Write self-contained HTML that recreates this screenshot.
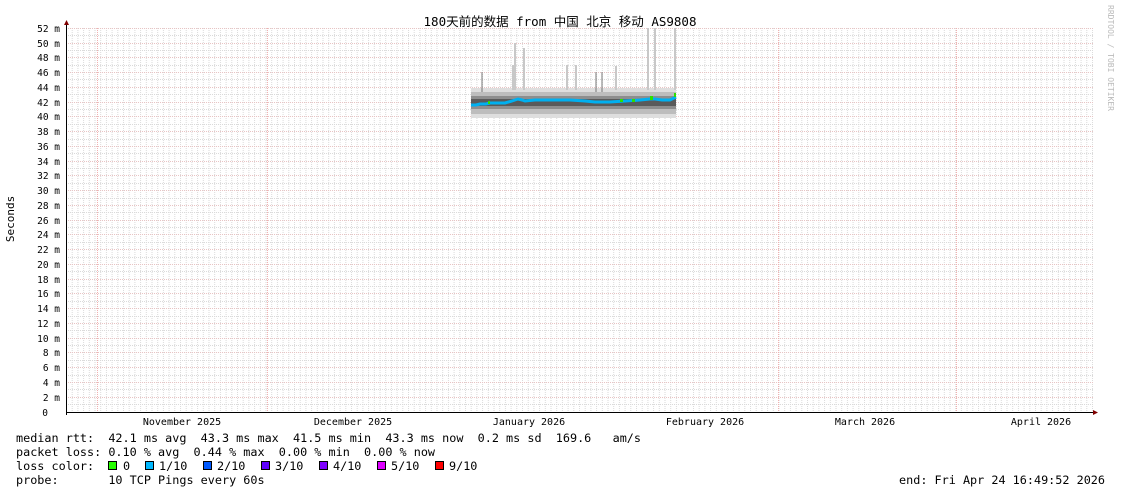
<!DOCTYPE html>
<html><head><meta charset="utf-8"><style>
html,body{margin:0;padding:0;background:#fff;width:1121px;height:494px;overflow:hidden}
svg{display:block}
.m{font-family:"DejaVu Sans Mono","Liberation Mono",monospace;fill:#000}
</style></head><body>
<svg width="1121" height="494" viewBox="0 0 1121 494" xmlns="http://www.w3.org/2000/svg">
<defs>
<pattern id="vg" x="66" y="0" width="5.7" height="494" patternUnits="userSpaceOnUse">
<line x1="0.5" y1="0" x2="0.5" y2="494" stroke="#dadada" stroke-width="1" stroke-dasharray="1,1"/>
</pattern>
</defs>
<rect x="66" y="28" width="1027" height="384" fill="url(#vg)"/>
<g stroke="#dadada" stroke-dasharray="1,1">
<line x1="66" x2="1093" y1="35.5" y2="35.5"/><line x1="66" x2="1093" y1="50.5" y2="50.5"/><line x1="66" x2="1093" y1="65.5" y2="65.5"/><line x1="66" x2="1093" y1="79.5" y2="79.5"/><line x1="66" x2="1093" y1="94.5" y2="94.5"/><line x1="66" x2="1093" y1="109.5" y2="109.5"/><line x1="66" x2="1093" y1="124.5" y2="124.5"/><line x1="66" x2="1093" y1="139.5" y2="139.5"/><line x1="66" x2="1093" y1="153.5" y2="153.5"/><line x1="66" x2="1093" y1="168.5" y2="168.5"/><line x1="66" x2="1093" y1="183.5" y2="183.5"/><line x1="66" x2="1093" y1="198.5" y2="198.5"/><line x1="66" x2="1093" y1="212.5" y2="212.5"/><line x1="66" x2="1093" y1="227.5" y2="227.5"/><line x1="66" x2="1093" y1="242.5" y2="242.5"/><line x1="66" x2="1093" y1="257.5" y2="257.5"/><line x1="66" x2="1093" y1="271.5" y2="271.5"/><line x1="66" x2="1093" y1="286.5" y2="286.5"/><line x1="66" x2="1093" y1="301.5" y2="301.5"/><line x1="66" x2="1093" y1="316.5" y2="316.5"/><line x1="66" x2="1093" y1="330.5" y2="330.5"/><line x1="66" x2="1093" y1="345.5" y2="345.5"/><line x1="66" x2="1093" y1="360.5" y2="360.5"/><line x1="66" x2="1093" y1="375.5" y2="375.5"/><line x1="66" x2="1093" y1="389.5" y2="389.5"/><line x1="66" x2="1093" y1="404.5" y2="404.5"/>
</g>
<g stroke="#e8c4c4" stroke-dasharray="1,1">
<line x1="66" x2="1093" y1="28.5" y2="28.5"/><line x1="66" x2="1093" y1="43.5" y2="43.5"/><line x1="66" x2="1093" y1="57.5" y2="57.5"/><line x1="66" x2="1093" y1="72.5" y2="72.5"/><line x1="66" x2="1093" y1="87.5" y2="87.5"/><line x1="66" x2="1093" y1="102.5" y2="102.5"/><line x1="66" x2="1093" y1="116.5" y2="116.5"/><line x1="66" x2="1093" y1="131.5" y2="131.5"/><line x1="66" x2="1093" y1="146.5" y2="146.5"/><line x1="66" x2="1093" y1="161.5" y2="161.5"/><line x1="66" x2="1093" y1="175.5" y2="175.5"/><line x1="66" x2="1093" y1="190.5" y2="190.5"/><line x1="66" x2="1093" y1="205.5" y2="205.5"/><line x1="66" x2="1093" y1="220.5" y2="220.5"/><line x1="66" x2="1093" y1="234.5" y2="234.5"/><line x1="66" x2="1093" y1="249.5" y2="249.5"/><line x1="66" x2="1093" y1="264.5" y2="264.5"/><line x1="66" x2="1093" y1="279.5" y2="279.5"/><line x1="66" x2="1093" y1="293.5" y2="293.5"/><line x1="66" x2="1093" y1="308.5" y2="308.5"/><line x1="66" x2="1093" y1="323.5" y2="323.5"/><line x1="66" x2="1093" y1="338.5" y2="338.5"/><line x1="66" x2="1093" y1="352.5" y2="352.5"/><line x1="66" x2="1093" y1="367.5" y2="367.5"/><line x1="66" x2="1093" y1="382.5" y2="382.5"/><line x1="66" x2="1093" y1="397.5" y2="397.5"/>
</g>
<g stroke="#f0b0b0" stroke-dasharray="1,1">
<line x1="97.5" x2="97.5" y1="28" y2="412"/><line x1="267.5" x2="267.5" y1="28" y2="412"/><line x1="778.5" x2="778.5" y1="28" y2="412"/><line x1="956.5" x2="956.5" y1="28" y2="412"/>
</g>
<!-- data -->
<g>
<rect x="471" y="88" width="205" height="30" fill="#dedede"/>
<rect x="471" y="92" width="205" height="22" fill="#bdbdbd"/>
<rect x="471" y="96" width="205" height="13" fill="#8e8e8e"/>
<rect x="471" y="99" width="205" height="7" fill="#5a5a5a"/>
<g stroke="#c8c8c8" stroke-width="2">
<line x1="515" y1="43" x2="515" y2="90"/><line x1="513" y1="65" x2="513" y2="90"/><line x1="524" y1="48" x2="524" y2="90"/><line x1="567" y1="65" x2="567" y2="90"/><line x1="576" y1="65" x2="576" y2="90"/><line x1="616" y1="66" x2="616" y2="90"/><line x1="648" y1="28" x2="648" y2="90"/><line x1="655" y1="28" x2="655" y2="90"/><line x1="675" y1="28" x2="675" y2="90"/>
</g>
<g stroke="#777" stroke-width="1"><line x1="482" y1="72" x2="482" y2="92"/><line x1="596" y1="72" x2="596" y2="92"/><line x1="602" y1="72" x2="602" y2="92"/></g>
<polyline fill="none" stroke="#00b0f0" stroke-width="3" points="471,105 476,105 480,104 486,104 490,103 500,103 505,103 512,101 518,99 522,100 525,101 535,100 550,100 570,100 585,101 595,102 610,102 625,101 640,100 650,99 655,99 662,100 670,100 676,97"/>
<g fill="#2de000"><rect x="488" y="101" width="2" height="3"/><rect x="620" y="99" width="3" height="3"/><rect x="632" y="99" width="3" height="3"/><rect x="650" y="96" width="3" height="4"/><rect x="674" y="93" width="2" height="4"/></g>
</g>
<line x1="66" y1="412.5" x2="1094" y2="412.5" stroke="#000"/>
<line x1="66.5" y1="24" x2="66.5" y2="415" stroke="#000"/>
<polygon points="64,25 69,25 66.5,20" fill="#800000"/>
<polygon points="1093,410 1093,415 1098,412.5" fill="#800000"/>
<g class="m" font-size="9.5" text-anchor="end">
<text x="60" y="32">52 m</text><text x="60" y="47">50 m</text><text x="60" y="61">48 m</text><text x="60" y="76">46 m</text><text x="60" y="91">44 m</text><text x="60" y="106">42 m</text><text x="60" y="120">40 m</text><text x="60" y="135">38 m</text><text x="60" y="150">36 m</text><text x="60" y="165">34 m</text><text x="60" y="179">32 m</text><text x="60" y="194">30 m</text><text x="60" y="209">28 m</text><text x="60" y="224">26 m</text><text x="60" y="238">24 m</text><text x="60" y="253">22 m</text><text x="60" y="268">20 m</text><text x="60" y="283">18 m</text><text x="60" y="297">16 m</text><text x="60" y="312">14 m</text><text x="60" y="327">12 m</text><text x="60" y="342">10 m</text><text x="60" y="356">8 m</text><text x="60" y="371">6 m</text><text x="60" y="386">4 m</text><text x="60" y="401">2 m</text><text x="48" y="416">0</text>
</g>
<g class="m" font-size="10" text-anchor="middle">
<text x="182" y="425">November 2025</text><text x="353" y="425">December 2025</text><text x="529" y="425">January 2026</text><text x="705" y="425">February 2026</text><text x="865" y="425">March 2026</text><text x="1041" y="425">April 2026</text>
</g>
<text class="m" font-size="11" transform="translate(14,219) rotate(-90)" text-anchor="middle">Seconds</text>
<text font-family="'DejaVu Sans Mono','Noto Sans CJK SC',monospace" font-size="12.5" x="560" y="26" text-anchor="middle">180天前的数据 from 中国 北京 移动 AS9808</text>
<text class="m" font-size="8" style="fill:#bbb" transform="translate(1108,5) rotate(90)">RRDTOOL / TOBI OETIKER</text>
<g class="m" font-size="11.8">
<text x="16" y="442" xml:space="preserve">median rtt:  42.1 ms avg  43.3 ms max  41.5 ms min  43.3 ms now  0.2 ms sd  169.6   am/s</text>
<text x="16" y="456" xml:space="preserve">packet loss: 0.10 % avg  0.44 % max  0.00 % min  0.00 % now</text>
<text x="16" y="470">loss color:</text>
<text x="123" y="470">0</text><text x="159" y="470">1/10</text><text x="217" y="470">2/10</text><text x="275" y="470">3/10</text><text x="333" y="470">4/10</text><text x="391" y="470">5/10</text><text x="449" y="470">9/10</text>
<text x="16" y="484" xml:space="preserve">probe:       10 TCP Pings every 60s</text>
<text x="1105" y="484" text-anchor="end">end: Fri Apr 24 16:49:52 2026</text>
</g>
<g stroke="#000" stroke-width="1">
<rect x="108.5" y="461.5" width="8" height="8" fill="#26ff00"/>
<rect x="145.5" y="461.5" width="8" height="8" fill="#00b8ff"/>
<rect x="203.5" y="461.5" width="8" height="8" fill="#0059ff"/>
<rect x="261.5" y="461.5" width="8" height="8" fill="#5e00ff"/>
<rect x="319.5" y="461.5" width="8" height="8" fill="#7e00ff"/>
<rect x="377.5" y="461.5" width="8" height="8" fill="#dd00ff"/>
<rect x="435.5" y="461.5" width="8" height="8" fill="#ff0000"/>
</g>
</svg>
</body></html>
